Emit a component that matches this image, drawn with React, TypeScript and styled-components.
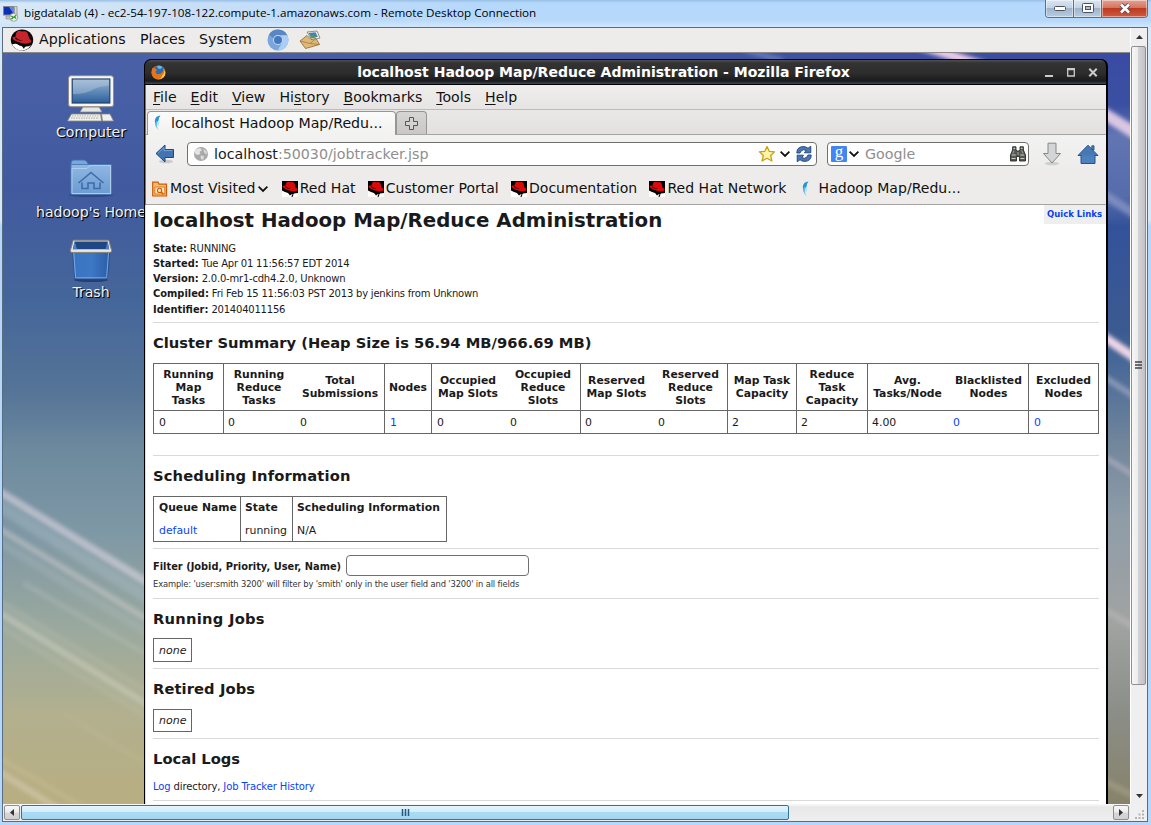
import React from 'react';
import styled, { createGlobalStyle } from 'styled-components';

const GlobalStyle = createGlobalStyle`
    body {
        margin: 0;
        overflow: hidden;
        font-family: 'DejaVu Sans', sans-serif;
        color: #1a1a1a;
    }
    * {
        box-sizing: border-box;
    }
    svg {
        display: block;
        flex: none;
    }
`;

const Screen = styled.div`
    display: flex;
    flex-direction: column;
    width: 1151px;
    height: 825px;
    background: linear-gradient(180deg, #d6e9fb 0, #d6e9fb 220px, #b4d8fb 226px, #b4d8fb 100%);
    overflow: hidden;
`;

const RdpTitle = styled.div`
    display: flex;
    align-items: flex-start;
    height: 27px;
    padding-left: 3px;
    background: linear-gradient(180deg, #98bfe6 0, rgba(255, 255, 255, 0) 3px, rgba(255, 255, 255, 0) 20px, #cfe5fb 26px),
        linear-gradient(90deg, #d9e8f6 0, #c9dff7 180px, #b5d8fb 480px, #b5d8fb 100%);
`;

const RdpCaption = styled.div`
    flex: 1;
    margin-left: 5px;
    font: 11.68px/26px 'Open Sans', 'Noto Sans', sans-serif;
    color: #000;
    white-space: nowrap;
`;

const RdpControls = styled.div`
    display: flex;
    width: 103px;
    height: 18px;
    margin-right: 3px;
    border: 1px solid #5d6f86;
    border-top: 0;
    border-radius: 0 0 4px 4px;
    overflow: hidden;
`;

const RdpButton = styled.div<{ $width: number; $close?: boolean }>`
    display: flex;
    align-items: center;
    justify-content: center;
    width: ${p => p.$width}px;
    border-left: ${p => (p.$width === 27 ? 0 : 1)}px solid #5d6f86;
    box-shadow: inset 0 0 0 1px rgba(255, 255, 255, 0.45);
    background: ${p =>
        p.$close
            ? 'linear-gradient(180deg, #e3a294 0, #d4745f 45%, #bd3a20 50%, #cf5c40 100%)'
            : 'linear-gradient(180deg, #dbe6f3 0, #c4d2e4 45%, #9fb3cb 50%, #b8cce2 100%)'};
`;

const Client = styled.div`
    display: grid;
    grid-template-columns: 1127px 17px;
    grid-template-rows: 776px 17px;
    width: 1146px;
    margin-left: 2px;
    border: 1px solid #5c6c80;
`;

const Remote = styled.div`
    display: flex;
    flex-direction: column;
    overflow: hidden;
`;

const GnomePanel = styled.div`
    display: flex;
    align-items: center;
    height: 25px;
    padding-left: 7px;
    background: #edeceb;
    border-bottom: 1px solid #8b8a86;
    font-size: 14.2px;
    color: #111;
`;

const PanelItem = styled.span<{ $width: number }>`
    width: ${p => p.$width}px;
    padding-bottom: 2px;
    line-height: 20px;
    white-space: nowrap;
`;

const Desktop = styled.div`
    position: relative;
    flex: 1;
    overflow: hidden;
    background: #4a66a4;
`;

const Wallpaper = styled.svg`
    position: absolute;
    top: 0;
    left: 0;
`;

const Launcher = styled.div<{ $top: number }>`
    position: absolute;
    left: 18px;
    top: ${p => p.$top}px;
    width: 140px;
    display: flex;
    flex-direction: column;
    align-items: center;
    font-size: 14.1px;
    line-height: 18px;
    color: #f2f2f2;
    white-space: nowrap;
    text-shadow: 1px 1px 1px #000, 1px 1px 0 rgba(0, 0, 0, 0.6);
`;

const Firefox = styled.div`
    position: absolute;
    left: 141px;
    top: 6px;
    width: 964px;
    height: 760px;
    display: flex;
    flex-direction: column;
    border: 1px solid #000;
    border-right-width: 2px;
    border-radius: 7px 7px 0 0;
    background: #000;
    overflow: hidden;
`;

const FirefoxTitle = styled.div`
    display: flex;
    align-items: center;
    height: 25px;
    padding: 0 8px 0 6px;
    border-bottom: 1px solid #000;
    background: linear-gradient(180deg, #505050 0, #333 3px, #2d2d2d 55%, #1a1a1a 21px, #3b4c66 24px);
`;

const FirefoxCaption = styled.div`
    flex: 1;
    padding-right: 3px;
    font-size: 14.03px;
    font-weight: bold;
    line-height: 22px;
    text-align: center;
    color: #fff;
`;

const Chrome = styled.div`
    border-left: 1px solid #777;
    background: #edeceb;
    color: #111;
    font-size: 14.1px;
`;

const MenuBar = styled.div`
    display: flex;
    gap: 14px;
    height: 25px;
    padding-left: 7px;
    line-height: 24px;
    border-bottom: 1px solid #bdbcba;
    background: linear-gradient(180deg, #efeeed, #e6e5e3);

    u {
        text-underline-offset: 2px;
        text-decoration-thickness: 1px;
    }
`;

const TabBar = styled.div`
    display: flex;
    align-items: flex-end;
    height: 25px;
    padding-left: 1px;
    border-bottom: 1px solid #a5a4a2;
    background: linear-gradient(180deg, #e9e8e6, #e2e1df);
`;

const Tab = styled.div`
    display: flex;
    align-items: center;
    width: 249px;
    height: 24px;
    margin-bottom: -1px;
    padding: 0 0 2px 3px;
    gap: 4px;
    border: 1px solid #979694;
    border-bottom: 0;
    border-radius: 4px 4px 0 0;
    background: linear-gradient(180deg, #fbfbfb, #f2f1f0);
    font-size: 14.2px;
`;

const NewTab = styled.div`
    display: flex;
    align-items: center;
    justify-content: center;
    width: 31px;
    height: 23px;
    border: 1px solid #979694;
    border-bottom: 0;
    border-radius: 4px 4px 0 0;
    background: linear-gradient(180deg, #d6d5d3, #c8c7c5);
`;

const NavBar = styled.div`
    display: flex;
    align-items: center;
    height: 38px;
    padding-left: 9px;
    background: linear-gradient(180deg, #f3f2f2, #edeceb);
`;

const Field = styled.div<{ $width: number; $left: number }>`
    display: flex;
    align-items: center;
    width: ${p => p.$width}px;
    height: 24px;
    margin-left: ${p => p.$left}px;
    padding: 0 4px 0 5px;
    border: 1px solid #70706e;
    border-radius: 4px;
    background: #fff;
    color: #8e8e8e;
    font-size: 14.24px;

    b {
        font-weight: normal;
        color: #1a1a1a;
    }
`;

const FieldText = styled.span<{ $left: number }>`
    flex: 1;
    margin-left: ${p => p.$left}px;
    white-space: nowrap;
`;

const ToolButton = styled.div<{ $left: number }>`
    margin-left: ${p => p.$left}px;
`;

const Bookmarks = styled.div`
    display: flex;
    align-items: center;
    height: 32px;
    padding-left: 6px;
    gap: 12.2px;
    border-bottom: 1px solid #a5a4a2;
    font-size: 14.05px;
`;

const Bookmark = styled.div<{ $gap?: number; $right?: number }>`
    display: flex;
    align-items: center;
    gap: ${p => p.$gap || 2}px;
    margin-right: ${p => p.$right || 0}px;
    white-space: nowrap;
`;

const BookmarkLabel = styled.span`
    padding-bottom: 2px;
`;

const Page = styled.div`
    position: relative;
    flex: 1;
    padding: 0 7px;
    border-left: 1px solid #ddd;
    background: #fff;
    overflow: hidden;
`;

const QuickLinks = styled.div`
    position: absolute;
    top: 0;
    right: 0;
    width: 62px;
    height: 19px;
    padding-left: 3px;
    background: #eee;
    font-size: 8.5px;
    font-weight: bold;
    line-height: 18px;
    white-space: nowrap;
    color: #0a40f5;
`;

const Section = styled.section<{ $height: number }>`
    height: ${p => p.$height}px;
    border-bottom: 1px solid #d9d9d9;
    overflow: hidden;
`;

const PageTitle = styled.h1`
    margin: 4px 0 8px;
    font-size: 19.77px;
    line-height: 24px;
`;

const Heading = styled.h2<{ $spacing?: number }>`
    margin: 10px 0 10px;
    font-size: 14.73px;
    line-height: 20px;
    letter-spacing: ${p => p.$spacing || 0}px;
`;

const MetaRow = styled.div<{ $top?: number; $spacing?: number }>`
    margin-top: ${p => p.$top || 0}px;
    font-size: 10px;
    line-height: 15px;
    letter-spacing: ${p => p.$spacing || -0.21}px;
    white-space: nowrap;

    b {
        font-size: 9.9px;
        letter-spacing: 0;
    }
`;

const Link = styled.span`
    color: #0a44f5;
`;

const Table = styled.div<{ $columns: string; $width: number }>`
    display: grid;
    grid-template-columns: ${p => p.$columns};
    width: ${p => p.$width}px;
    border: 1px solid #666;
    font-size: 10.8px;
`;

const HeadCell = styled.div<{ $line?: boolean; $height?: number; $pad?: number }>`
    display: flex;
    align-items: center;
    justify-content: ${p => (p.$pad ? 'flex-start' : 'center')};
    height: ${p => p.$height || 46}px;
    padding-left: ${p => p.$pad || 0}px;
    border-left: ${p => (p.$line ? 1 : 0)}px solid #666;
    line-height: 13px;
    font-weight: bold;
    text-align: center;
    white-space: pre;
`;

const Cell = styled.div<{ $line?: boolean; $pad?: number; $height?: number }>`
    height: ${p => p.$height || 22}px;
    padding-left: ${p => p.$pad || 4}px;
    border-left: ${p => (p.$line ? 1 : 0)}px solid #666;
    font-size: 10.9px;
    line-height: ${p => (p.$height || 22) + 2}px;
`;

const HeadLine = styled.div`
    grid-column: 1 / -1;
    height: 1px;
    background: #666;
`;

const FilterRow = styled.div`
    display: flex;
    align-items: center;
    height: 22px;
    margin-top: 5px;
    font-size: 9.85px;
    font-weight: bold;
`;

const FilterLabel = styled.label`
    width: 188px;
    padding-top: 2px;
    white-space: nowrap;
`;

const FilterInput = styled.input`
    width: 183px;
    height: 21px;
    margin-left: 5px;
    border: 1px solid #70706e;
    border-radius: 4px;
    background: #fff;
`;

const Example = styled.div`
    margin-top: 2px;
    font-size: 8.4px;
    line-height: 12px;
    letter-spacing: -0.15px;
    color: #333;
`;

const NoneBox = styled.div<{ $height: number }>`
    width: 39px;
    height: ${p => p.$height}px;
    margin-top: ${p => 23 - p.$height}px;
    padding-left: 5px;
    border: 1px solid #666;
    font-size: 11px;
    font-style: italic;
    line-height: ${p => p.$height - 1}px;
`;

const VScroll = styled.div`
    display: flex;
    flex-direction: column;
    align-items: center;
    background: #efefef;
    border-left: 1px solid #fff;
`;

const VThumb = styled.div`
    display: flex;
    flex: none;
    align-items: center;
    justify-content: center;
    width: 15px;
    height: 639px;
    margin-right: 1px;
    border: 1px solid #8f8f8f;
    border-radius: 2px;
    background: linear-gradient(90deg, #f7f7f7 0, #ececec 45%, #d3d3d6 50%, #c2c2c6 100%);
`;

const ArrowBox = styled.div<{ $bottom?: boolean }>`
    display: flex;
    flex: ${p => (p.$bottom ? '1' : 'none')};
    align-items: ${p => (p.$bottom ? 'flex-end' : 'center')};
    justify-content: center;
    height: 18px;
    padding-bottom: ${p => (p.$bottom ? 6 : 0)}px;
`;

const HScroll = styled.div`
    display: flex;
    align-items: center;
    padding: 0 1px;
    background: linear-gradient(180deg, #fafafa 0, #e8e8e8 3px, #efefef 100%);
`;

const HButton = styled.div`
    display: flex;
    align-items: center;
    justify-content: center;
    width: 16px;
    height: 15px;
    border: 1px solid #8f8f8f;
    border-radius: 2px;
    background: linear-gradient(180deg, #f6f6f6 0, #ececec 48%, #d6d6d8 52%, #d0d0d2 100%);
`;

const HThumb = styled.div`
    display: flex;
    align-items: center;
    justify-content: center;
    width: 768px;
    height: 15px;
    margin: 0 auto 0 1px;
    border: 1px solid #34729f;
    border-radius: 2px;
    background: linear-gradient(180deg, #e3f4fc 0, #d2edfa 46%, #a9dbf5 50%, #a4d6f0 100%);
`;

const Corner = styled.div`
    display: flex;
    align-items: flex-end;
    justify-content: flex-end;
    padding: 0 3px 2px 0;
    background: #f0f0f0;
`;

const STREAKS = [
    // left side
    { d: 'M-5 438 L150 533', w: 8, c: '#d6d2de', o: 0.65 },
    { d: 'M-5 452 L150 548', w: 12, c: '#a9bcc6', o: 0.4 },
    { d: 'M-5 475 L150 570', w: 6, c: '#cfcdcf', o: 0.5 },
    { d: 'M-5 488 L150 583', w: 9, c: '#b4c0c4', o: 0.25 },
    { d: 'M20 530 L150 605', w: 4, c: '#c3cbc8', o: 0.3 },
    { d: 'M-5 559 L150 655', w: 7, c: '#cdcfbe', o: 0.55 },
    { d: 'M-5 548 L150 642', w: 7, c: '#c0c2b0', o: 0.25 },
    { d: 'M-5 572 L150 667', w: 7, c: '#c0c2b0', o: 0.25 },
    { d: 'M60 660 L150 715', w: 4, c: '#c5bda4', o: 0.25 },
    { d: 'M-5 718 L70 765', w: 6, c: '#d8cbb0', o: 0.6 },
    { d: 'M-5 704 L90 760', w: 4, c: '#cdc195', o: 0.45 },
    // above the window
    { d: 'M915 -8 L985 14', w: 9, c: '#f6d2ee', o: 0.95 },
    { d: 'M740 -4 L780 8', w: 5, c: '#8aa0d4', o: 0.5 },
    // right side
    { d: 'M1095 57 L1135 82', w: 12, c: '#e2cce6', o: 0.95 },
    { d: 'M1095 138 L1135 163', w: 9, c: '#94a0ca', o: 0.65 },
    { d: 'M1095 280 L1135 307', w: 9, c: '#f8dcec', o: 0.95 },
    { d: 'M1095 320 L1135 346', w: 6, c: '#9aa5c2', o: 0.75 },
    { d: 'M1095 400 L1135 425', w: 5, c: '#b4b2c0', o: 0.7 },
    { d: 'M1095 553 L1135 576', w: 6, c: '#bdb7b8', o: 0.6 },
    { d: 'M1095 725 L1135 745', w: 6, c: '#b0aa90', o: 0.5 },
];

const DesktopWallpaper = () => (
    <Wallpaper width="1127" height="751">
        <defs>
            <linearGradient id="skyLeft" x1="0" y1="0" x2="0" y2="1">
                <stop offset="0" stopColor="#4a61a8" />
                <stop offset="0.18" stopColor="#415a9f" />
                <stop offset="0.33" stopColor="#45669a" />
                <stop offset="0.45" stopColor="#557497" />
                <stop offset="0.53" stopColor="#6d8a9e" />
                <stop offset="0.64" stopColor="#7f98a5" />
                <stop offset="0.77" stopColor="#9ba99e" />
                <stop offset="0.88" stopColor="#b2b08e" />
                <stop offset="1" stopColor="#b9ae82" />
            </linearGradient>
            <linearGradient id="skyRight" x1="0" y1="0" x2="0" y2="1">
                <stop offset="0" stopColor="#394ba2" />
                <stop offset="0.07" stopColor="#3b50a2" />
                <stop offset="0.11" stopColor="#6175b2" />
                <stop offset="0.19" stopColor="#566cab" />
                <stop offset="0.23" stopColor="#34529b" />
                <stop offset="0.37" stopColor="#3b5a90" />
                <stop offset="0.42" stopColor="#4a6a98" />
                <stop offset="0.52" stopColor="#72869c" />
                <stop offset="0.62" stopColor="#8f9da8" />
                <stop offset="0.76" stopColor="#a1a3a2" />
                <stop offset="0.88" stopColor="#8b8d87" />
                <stop offset="1" stopColor="#87836a" />
            </linearGradient>
            <linearGradient id="skyBlend" x1="0" y1="0" x2="1" y2="0">
                <stop offset="0" stopColor="#4a61a8" />
                <stop offset="1" stopColor="#394ba2" />
            </linearGradient>
            <filter id="soft" x="-20%" y="-20%" width="140%" height="140%">
                <feGaussianBlur stdDeviation="2" />
            </filter>
        </defs>
        <rect width="900" height="751" fill="url(#skyLeft)" />
        <rect x="900" width="227" height="751" fill="url(#skyRight)" />
        <rect x="150" width="950" height="10" fill="url(#skyBlend)" />
        {STREAKS.map(s => (
            <path key={s.d} d={s.d} stroke={s.c} strokeWidth={s.w} opacity={s.o} filter="url(#soft)" />
        ))}
    </Wallpaper>
);

const RdpIcon = () => (
    <svg width="16" height="17" viewBox="0 0 16 17">
        <rect x="0.5" y="1.5" width="10" height="8.5" fill="#0d2fb5" stroke="#7f8790" />
        <path d="M6 2 L10 2 L10 8 Z" fill="#5b86ee" />
        <path d="M11.5 1.5 h2.5 v9 h-2.5 z" fill="#d9d9d3" stroke="#8d8d85" strokeWidth="0.8" />
        <path d="M3 11 h6 v3 h-6 z" fill="#c9c9c2" stroke="#85857d" strokeWidth="0.6" />
        <circle cx="10.8" cy="12.3" r="4" fill="#eef2ea" stroke="#8b9286" strokeWidth="0.8" />
        <path d="M8.3 11 l2 1.6 l-2 1.6 M13.2 10.3 l-2 1.6 l2 1.6" fill="none" stroke="#2c9a2c" strokeWidth="1.3" />
    </svg>
);

const HatLogo = () => (
    <svg width="24" height="22" viewBox="0 0 24 22">
        <ellipse cx="12" cy="11" rx="11.2" ry="10.6" fill="#080808" />
        <path d="M2 15.5 Q4.5 14.2 7 15 Q9 17 12 17.2 L14 20 Q14 18 16 17.5 Q19 17.5 21 16 L18.5 19.2 Q14 22.3 9 21.3 Q4.5 19.8 2 15.5 Z" fill="#fff" />
        <path
            d="M2.5 9.5 Q2 7.5 5.5 7.7 Q6 2.5 8.5 1.8 Q10 1.6 12 2.6 Q16.5 1.6 17.6 4 L19.3 9.6 Q22.5 12 20.5 13.6 Q17 15.7 10.5 13.8 Q4 12 2.5 9.5 Z"
            fill="#c8242c"
        />
        <path d="M5.8 8 Q8.5 11.5 13 11.2 Q9.5 12.6 5 9.8 Z" fill="#3c0709" />
    </svg>
);

const HatFavicon = () => (
    <svg width="16" height="16" viewBox="0 0 16 16">
        <rect width="16" height="16" fill="#000" />
        <path d="M0 9.5 L3 11 L6 12 L8 14.5 L9.5 13.2 L11 13.8 L12 12.5 L16 12 V16 H0 Z" fill="#fff" />
        <path d="M3.5 10 L9 11 L8.5 13.2 L6.5 11.8 Z M10 14 L11.5 13.5 L10.5 16 H9.5 Z" fill="#000" />
        <path
            d="M0.5 5.5 Q1 4.2 3.3 4.8 L4.6 1.2 Q6.5 0.2 8.5 1.2 Q11.8 0.6 12.6 2.4 L13.4 6.2 Q16 7.6 15.5 9.2 Q13 11.4 8 9.8 Q2.5 8.5 0.5 5.5 Z"
            fill="#d80a0a"
        />
        <path d="M3.3 5 Q5.5 7.6 9 7.4 Q6 8.6 3 6.3 Z" fill="#400" />
    </svg>
);

const ChromiumIcon = () => (
    <svg width="22" height="22" viewBox="0 0 22 22">
        <circle cx="11" cy="11" r="10.5" fill="#7ba6dc" />
        <path d="M1.9 5.8 A10.5 10.5 0 0 1 20.3 6.2 L11 6.2 Q7.5 6.4 6.5 9.5 Z" fill="#5a86c3" />
        <path d="M20.3 6.2 A10.5 10.5 0 0 1 10.5 21.5 L15.3 13.5 Q16.5 9.5 13.8 6.2 Z" fill="#a9cdf3" />
        <circle cx="11" cy="11" r="5" fill="#c4daf4" />
        <circle cx="11" cy="11" r="4" fill="#4478c2" />
    </svg>
);

const MailIcon = () => (
    <svg width="22" height="20" viewBox="0 0 22 20">
        <path d="M8 2 L18 1 L21 8 L13 10 Z" fill="#f4f4ee" stroke="#777" strokeWidth="0.8" />
        <path d="M9.5 3 L16.5 2.3 L18.8 6.7 L12.8 8.3 Z" fill="#4a7fb5" />
        <path d="M11 6.5 l3 -2 l3.5 2.5 l-4.5 1.2 z" fill="#4f9a5a" />
        <path d="M1 11 L8 5.5 L12 9.5 L17 8.5 L20.5 14.5 L6.5 18.5 Z" fill="#dfb878" stroke="#8a6530" strokeWidth="0.8" />
        <path d="M1 11 L11 13.5 L17 8.5 M11 13.5 L20.5 14.5" fill="none" stroke="#a47a3e" strokeWidth="0.8" />
    </svg>
);

const ComputerIcon = () => (
    <svg width="48" height="48" viewBox="0 0 48 48">
        <defs>
            <linearGradient id="screen" x1="0" y1="0" x2="0" y2="1">
                <stop offset="0" stopColor="#9cb7d2" />
                <stop offset="1" stopColor="#2a5f9e" />
            </linearGradient>
        </defs>
        <path d="M16 32 h16 l3 5 h-22 z" fill="#e6e6e2" stroke="#8c8c86" strokeWidth="0.8" />
        <rect x="1.5" y="0.7" width="45" height="31" rx="2.5" fill="#f6f6f4" stroke="#908e86" />
        <rect x="5.2" y="4" width="37.6" height="24" fill="url(#screen)" stroke="#24406c" strokeWidth="1.2" />
        <path d="M6 19 Q20 19 27 14 Q33 11 42 10.5 V4.8 H6 Z" fill="#bcd0e2" opacity="0.4" />
        <path d="M36 34 q6 -2 9 0 q2 3 -4 3" fill="none" stroke="#3a68b0" strokeWidth="1.2" />
        <path d="M4.5 39 h29 l1 7 h-34 z" fill="#f0f0ec" stroke="#8c8c86" strokeWidth="0.8" />
        <path d="M5 41 h27 M4 43.2 h28" stroke="#b5b5ae" strokeWidth="1.2" strokeDasharray="1.5 1" />
        <path d="M34.5 39 h8.5 l3.5 7 h-11 z" fill="#f0f0ec" stroke="#8c8c86" strokeWidth="0.8" />
    </svg>
);

const HomeFolderIcon = () => (
    <svg width="46" height="40" viewBox="0 0 46 40">
        <defs>
            <linearGradient id="folder" x1="0" y1="0" x2="0" y2="1">
                <stop offset="0" stopColor="#8fb7e2" />
                <stop offset="1" stopColor="#6c9bd0" />
            </linearGradient>
        </defs>
        <ellipse cx="23" cy="36" rx="22" ry="2" fill="#1f3464" opacity="0.5" />
        <path d="M3 11 V4 Q3 1 6 1 h10 q2 0 3 2 l2 3 h3 v5 z" fill="#79a7db" stroke="#3f6fae" strokeWidth="0.9" />
        <rect x="3" y="5.5" width="40.5" height="30" rx="1" fill="url(#folder)" stroke="#4a78b6" strokeWidth="0.9" />
        <path d="M4 34.5 V9.5 H19 L22 6.5 H42.5 V34.5 Z" fill="none" stroke="#b3d0f0" strokeWidth="0.9" />
        <path
            d="M10.5 24 L23 13.5 L35.5 24 M14 23.5 V29.5 H20 V24 H26 V29.5 H32 V23.5"
            fill="none"
            stroke="#3c6cac"
            strokeWidth="1.6"
        />
    </svg>
);

const TrashIcon = () => (
    <svg width="44" height="44" viewBox="0 0 44 44">
        <defs>
            <linearGradient id="bin" x1="0" y1="0" x2="1" y2="0">
                <stop offset="0" stopColor="#3a74c0" />
                <stop offset="0.5" stopColor="#3d78c6" />
                <stop offset="1" stopColor="#2b5ca4" />
            </linearGradient>
        </defs>
        <ellipse cx="22" cy="41" rx="17" ry="2" fill="#15264e" opacity="0.6" />
        <path d="M3.5 12 L5.5 37 Q5.7 40 8 40 H36 Q38.5 40 38.7 37 L41 12 Z" fill="url(#bin)" stroke="#2a4f8c" strokeWidth="0.9" />
        <path d="M4.7 13 L6.6 38.8 H37.6 L39.6 13" fill="none" stroke="#7fb0ea" strokeWidth="0.9" />
        <path d="M4.2 1.2 H39.8 L42.6 11.5 Q42.8 13.4 41 13.4 H3 Q1.2 13.4 1.4 11.5 Z" fill="#e9e8e2" stroke="#84837a" strokeWidth="1" />
        <path d="M5.7 2.4 H38.6 L40.2 10.2 H3.8 Z" fill="#1f4685" />
        <path d="M5.7 2.4 L8 10.2 H3.8 Z M38.6 2.4 L36.5 10.2 H40.2 Z" fill="#4e82c4" />
    </svg>
);

const FirefoxIcon = () => (
    <svg width="15" height="15" viewBox="0 0 15 15">
        <circle cx="7.5" cy="7.5" r="7" fill="#e36a13" />
        <circle cx="8.3" cy="5.8" r="5.3" fill="#2c6bb4" />
        <path d="M6 1.2 Q9 0 11.5 2 L9.5 4 L7 3.5 Z" fill="#67b7e6" />
        <path d="M1 4 Q2 2 2.8 3.5 Q5 3.2 6 5 L4.5 6.5 Q4.5 9 7 9.3 Q10 9.3 11.5 7 Q12.8 5 12 2.6 Q15 5.5 14.4 8.7 Q13 14 7.5 14.5 Q1.5 14 0.6 8.5 Z" fill="#e8741a" />
        <path d="M11.5 10 Q14 7.5 13 4.5 Q15 7 14 10 Q12 14 8 14 Q11 13 11.5 10 Z" fill="#fbd13a" />
    </svg>
);

const FeatherIcon = () => (
    <svg width="16" height="16" viewBox="0 0 16 16">
        <path d="M9.5 0.5 Q4.2 0.8 3.8 6 Q3.8 9.5 5.4 12 Q5 8 7.6 5.5 Q7.6 2.6 9.5 0.5 Z" fill="#1f95dc" />
        <path d="M6.2 5 Q4.8 10 7.5 15 Q4.3 12.4 4.2 8 Z" fill="#63c2f0" />
        <path d="M6 8 l2 -0.8 l-1.6 2.2 l1.5 -0.3 l-1.2 1.8" fill="none" stroke="#9fdcf8" strokeWidth="0.8" />
    </svg>
);

const BackIcon = () => (
    <svg width="20" height="20" viewBox="0 0 20 20">
        <ellipse cx="11" cy="17.5" rx="7" ry="1.8" fill="#bbb" opacity="0.7" />
        <path d="M1 9.5 L10 1 V5.5 H18.5 V13.5 H10 V18 Z" fill="#4273b3" stroke="#1f4880" strokeWidth="1" />
        <path d="M2.8 9.5 L9 3.5 V6.6 H17.4" fill="none" stroke="#7fa6d6" strokeWidth="0.9" />
    </svg>
);

const GlobeIcon = () => (
    <svg width="16" height="16" viewBox="0 0 16 16">
        <circle cx="8" cy="8" r="7" fill="#a9a9a9" />
        <path d="M2 4.5 Q4.5 1.5 7.5 2.3 L9 4 L6.5 6 L7.5 8 L4.5 9 L2 7.5 Z" fill="#e4e4e4" />
        <path d="M10 3 L13.5 5 L14 8.5 L11.5 7 Z M7.5 9.5 L11 10 L10.5 13.2 L8 13.5 Z" fill="#dcdcdc" />
    </svg>
);

const StarIcon = () => (
    <svg width="18" height="18" viewBox="0 0 18 18">
        <path
            d="M9 1.5 L11.2 6.3 L16.6 6.8 L12.7 10.5 L13.9 16 L9 13.3 L4.1 16 L5.3 10.5 L1.4 6.8 L6.8 6.3 Z"
            fill="#fdf6a8"
            stroke="#caa016"
            strokeWidth="1.3"
            strokeLinejoin="round"
        />
    </svg>
);

const Chevron = () => (
    <svg width="10" height="8" viewBox="0 0 10 8">
        <path d="M0.6 1.6 L5 5.9 L9.4 1.6" fill="none" stroke="#111" strokeWidth="1.8" />
    </svg>
);

const ReloadIcon = () => (
    <svg width="16" height="18" viewBox="0 0 16 18">
        <path d="M0.8 8 Q0.8 2 7 1.6 Q10 1.4 12 3.3 L14.8 1.2 V7.8 H8.4 L10.2 5.4 Q7.4 3.8 5 6 L4 8 Z" fill="#4a78b6" stroke="#1e4376" strokeWidth="0.9" />
        <path d="M15.2 10 Q15.2 16 9 16.4 Q6 16.6 4 14.7 L1.2 16.8 V10.2 H7.6 L5.8 12.6 Q8.6 14.2 11 12 L12 10 Z" fill="#4a78b6" stroke="#1e4376" strokeWidth="0.9" />
    </svg>
);

const GoogleBadge = styled.span`
    width: 16px;
    height: 16px;
    margin-left: -2px;
    margin-right: 2px;
    border-radius: 1px;
    background: #4285f4;
    color: #fff;
    font: 17px/11px 'Liberation Serif', serif;
    text-align: center;
`;

const BinocularsIcon = () => (
    <svg width="16" height="16" viewBox="0 0 16 16">
        <path d="M2.6 0.8 H6 V4 L7 5 H9 L10 4 V0.8 H13.4 V4 L15.5 9 V15 H9.5 V10.5 H6.5 V15 H0.5 V9 L2.6 4 Z" fill="#555753" stroke="#2a2b29" strokeWidth="0.9" />
        <path d="M1.8 9 H5.7 M10.3 9 H14.2 M3.4 2.4 H5.2 M10.8 2.4 H12.6 M1.6 12.5 H5.6 M10.4 12.5 H14.4" stroke="#c8cac5" strokeWidth="1.1" />
        <path d="M4 4.5 L2.8 7.4 M11.8 4.5 L13 7.4 M8 6 V9" stroke="#a3a5a0" strokeWidth="1" />
    </svg>
);

const DownloadIcon = () => (
    <svg width="20" height="24" viewBox="0 0 20 24">
        <ellipse cx="10" cy="21.5" rx="7" ry="1.8" fill="#bbb" opacity="0.6" />
        <path d="M6 1.2 H14 V11.5 H18.5 L10 21 L1.5 11.5 H6 Z" fill="#d3d6d6" stroke="#858885" strokeWidth="1" />
    </svg>
);

const HomeIcon = () => (
    <svg width="22" height="21" viewBox="0 0 22 21">
        <path d="M4 10 V19.5 H18 V10 L11 3.5 Z" fill="#4d80bd" stroke="#28528c" strokeWidth="1" />
        <path d="M14.8 1.8 H17 V6 H14.8 Z" fill="#4d80bd" stroke="#28528c" strokeWidth="0.9" />
        <path d="M1 11.5 L11 1.2 L21 11.5 Z" fill="#4678b6" stroke="#28528c" strokeWidth="1" />
        <path d="M4.6 10.6 H17.4 V12.6 H4.6 Z" fill="#4a7cba" />
    </svg>
);

const MostVisitedIcon = () => (
    <svg width="16" height="16" viewBox="0 0 16 16">
        <path d="M0.7 15 V1.2 H6 L7 3.2 H14.5 V15 Z" fill="#f6b877" stroke="#ce5c00" strokeWidth="1.2" />
        <path d="M2.8 13 V6 H12.8 V13 Z" fill="#fce3c4" stroke="#e07b1c" strokeWidth="1" />
        <circle cx="7.6" cy="9.4" r="2.1" fill="none" stroke="#ce5c00" strokeWidth="1.1" />
        <path d="M9.2 11 L11.4 13.2" stroke="#ce5c00" strokeWidth="1.3" />
    </svg>
);

const PlusIcon = () => (
    <svg width="13" height="13" viewBox="0 0 13 13">
        <path d="M4.5 0.5 H8.5 V4.5 H12.5 V8.5 H8.5 V12.5 H4.5 V8.5 H0.5 V4.5 H4.5 Z" fill="#d4d3d1" stroke="#555" strokeWidth="1" />
    </svg>
);

const WindowButtons = () => (
    <svg width="54" height="14" viewBox="0 0 54 14">
        <path d="M1 11 H9" stroke="#ccc" strokeWidth="2" />
        <path d="M23.7 4.5 H30.3 V11 H23.7 Z" fill="none" stroke="#ccc" strokeWidth="1.3" />
        <path d="M23 4 H31" stroke="#ccc" strokeWidth="1.8" />
        <path d="M45.3 3.8 L52.7 11.2 M52.7 3.8 L45.3 11.2" stroke="#ccc" strokeWidth="2" />
    </svg>
);

const MENUS: [string, string, string][] = [
    ['', 'F', 'ile'],
    ['', 'E', 'dit'],
    ['', 'V', 'iew'],
    ['Hi', 's', 'tory'],
    ['', 'B', 'ookmarks'],
    ['', 'T', 'ools'],
    ['', 'H', 'elp'],
];

const BOOKMARKS = ['Red Hat', 'Customer Portal', 'Documentation', 'Red Hat Network'];

const META = [
    { label: 'State', value: 'RUNNING' },
    { label: 'Started', value: 'Tue Apr 01 11:56:57 EDT 2014' },
    { label: 'Version', value: '2.0.0-mr1-cdh4.2.0, Unknown' },
    { label: 'Compiled', value: 'Fri Feb 15 11:56:03 PST 2013 by jenkins from Unknown' },
    { label: 'Identifier', value: '201404011156' },
];

const SUMMARY = [
    { head: 'Running\nMap\nTasks', value: '0', width: 69, pad: 5 },
    { head: 'Running\nReduce\nTasks', value: '0', width: 71, line: true },
    { head: 'Total\nSubmissions', value: '0', width: 90, pad: 6, shift: 1 },
    { head: 'Nodes', value: '1', width: 47, line: true, link: true, pad: 5 },
    { head: 'Occupied\nMap Slots', value: '0', width: 73, line: true, pad: 5 },
    { head: 'Occupied\nReduce\nSlots', value: '0', width: 76, pad: 6, shift: 1 },
    { head: 'Reserved\nMap Slots', value: '0', width: 72, line: true },
    { head: 'Reserved\nReduce\nSlots', value: '0', width: 75, pad: 6, shift: 1 },
    { head: 'Map Task\nCapacity', value: '2', width: 69, line: true },
    { head: 'Reduce\nTask\nCapacity', value: '2', width: 71, line: true },
    { head: 'Avg.\nTasks/Node', value: '4.00', width: 80, line: true },
    { head: 'Blacklisted\nNodes', value: '0', width: 81, link: true, pad: 6, shift: 1 },
    { head: 'Excluded\nNodes', value: '0', width: 70, line: true, link: true, pad: 5 },
];

const HeadLabel = styled.span<{ $shift: number }>`
    padding-left: ${p => p.$shift * 2}px;
`;

const ClusterSummary = () => (
    <Table $width={946} $columns={SUMMARY.map(c => `${c.width}px`).join(' ')}>
        {SUMMARY.map(c => (
            <HeadCell key={c.head} $line={c.line}>
                <HeadLabel $shift={c.shift || 0}>{c.head}</HeadLabel>
            </HeadCell>
        ))}
        <HeadLine />
        {SUMMARY.map(c => (
            <Cell key={c.head} $line={c.line} $pad={c.pad}>
                {c.link ? <Link>{c.value}</Link> : c.value}
            </Cell>
        ))}
    </Table>
);

const SchedulingTable = () => (
    <Table $width={294} $columns="86px 52px 154px">
        <HeadCell $height={21} $pad={5}>Queue Name</HeadCell>
        <HeadCell $line $height={21} $pad={4}>State</HeadCell>
        <HeadCell $line $height={21} $pad={4}>Scheduling Information</HeadCell>
        <Cell $height={23} $pad={5}><Link>default</Link></Cell>
        <Cell $height={23} $line>running</Cell>
        <Cell $height={23} $line>N/A</Cell>
    </Table>
);

const JobTracker = () => (
    <Page>
        <QuickLinks>Quick Links</QuickLinks>
        <Section $height={118}>
            <PageTitle>localhost Hadoop Map/Reduce Administration</PageTitle>
            {META.map((m, index) => (
                <MetaRow key={m.label} $top={index === 4 ? 1 : 0}>
                    <b>{m.label}:</b> {m.value}
                </MetaRow>
            ))}
        </Section>
        <Section $height={133}>
            <Heading>Cluster Summary (Heap Size is 56.94 MB/966.69 MB)</Heading>
            <ClusterSummary />
        </Section>
        <Section $height={93}>
            <Heading $spacing={0.13}>Scheduling Information</Heading>
            <SchedulingTable />
        </Section>
        <Section $height={50}>
            <FilterRow>
                <FilterLabel>Filter (Jobid, Priority, User, Name)</FilterLabel>
                <FilterInput />
            </FilterRow>
            <Example>Example: 'user:smith 3200' will filter by 'smith' only in the user field and '3200' in all fields</Example>
        </Section>
        <Section $height={70}>
            <Heading $spacing={0.25}>Running Jobs</Heading>
            <NoneBox $height={24}>none</NoneBox>
        </Section>
        <Section $height={70}>
            <Heading $spacing={0.08}>Retired Jobs</Heading>
            <NoneBox $height={23}>none</NoneBox>
        </Section>
        <Section $height={62}>
            <Heading>Local Logs</Heading>
            <MetaRow $spacing={-0.12}>
                <Link>Log</Link> directory, <Link>Job Tracker History</Link>
            </MetaRow>
        </Section>
    </Page>
);

const FirefoxWindow = () => (
    <Firefox>
        <FirefoxTitle>
            <FirefoxIcon />
            <FirefoxCaption>localhost Hadoop Map/Reduce Administration - Mozilla Firefox</FirefoxCaption>
            <WindowButtons />
        </FirefoxTitle>
        <Chrome>
            <MenuBar>
                {MENUS.map(([before, key, after]) => (
                    <span key={after}>{before}<u>{key}</u>{after}</span>
                ))}
            </MenuBar>
            <TabBar>
                <Tab>
                    <FeatherIcon />
                    localhost Hadoop Map/Redu...
                </Tab>
                <NewTab><PlusIcon /></NewTab>
            </TabBar>
            <NavBar>
                <BackIcon />
                <Field $width={630} $left={12}>
                    <GlobeIcon />
                    <FieldText $left={5}><b>localhost</b>:50030/jobtracker.jsp</FieldText>
                    <StarIcon />
                    <ToolButton $left={4}><Chevron /></ToolButton>
                    <ToolButton $left={6}><ReloadIcon /></ToolButton>
                </Field>
                <Field $width={202} $left={10}>
                    <GoogleBadge>g</GoogleBadge>
                    <Chevron />
                    <FieldText $left={6}>Google</FieldText>
                    <ToolButton $left={0} style={{ marginRight: -2 }}><BinocularsIcon /></ToolButton>
                </Field>
                <ToolButton $left={13}><DownloadIcon /></ToolButton>
                <ToolButton $left={15}><HomeIcon /></ToolButton>
            </NavBar>
            <Bookmarks>
                <Bookmark $right={2}>
                    <MostVisitedIcon />
                    <BookmarkLabel>Most Visited</BookmarkLabel>
                    <Chevron />
                </Bookmark>
                {BOOKMARKS.map(name => (
                    <Bookmark key={name}>
                        <HatFavicon />
                        <BookmarkLabel>{name}</BookmarkLabel>
                    </Bookmark>
                ))}
                <Bookmark $gap={4}>
                    <FeatherIcon />
                    <BookmarkLabel>Hadoop Map/Redu...</BookmarkLabel>
                </Bookmark>
            </Bookmarks>
        </Chrome>
        <JobTracker />
    </Firefox>
);

const App = () => (
    <>
        <GlobalStyle />
        <Screen>
            <RdpTitle>
                <svg width="16" height="24" viewBox="0 -5 16 24"><RdpIcon /></svg>
                <RdpCaption>
                    bigdatalab (4) - ec2-54-197-108-122.compute-1.amazonaws.com - Remote Desktop Connection
                </RdpCaption>
                <RdpControls>
                    <RdpButton $width={27}>
                        <svg width="12" height="5"><rect x="0.5" y="0.5" width="11" height="4" rx="1" fill="#fff" stroke="#4b5360" /></svg>
                    </RdpButton>
                    <RdpButton $width={28}>
                        <svg width="12" height="11">
                            <rect x="0.5" y="0.5" width="11" height="9" rx="1" fill="#fff" stroke="#4b5360" />
                            <rect x="3.5" y="3.5" width="5" height="3" fill="#b0c0d4" stroke="#4b5360" />
                        </svg>
                    </RdpButton>
                    <RdpButton $width={46} $close>
                        <svg width="12" height="11" viewBox="0 0 12 11">
                            <path d="M2 1.5 L10 9.5 M10 1.5 L2 9.5" stroke="#4b4f5a" strokeWidth="4.4" />
                            <path d="M2 1.5 L10 9.5 M10 1.5 L2 9.5" stroke="#fff" strokeWidth="2.6" />
                        </svg>
                    </RdpButton>
                </RdpControls>
            </RdpTitle>
            <Client>
                <Remote>
                    <GnomePanel>
                        <HatLogo />
                        <PanelItem $width={101} style={{ marginLeft: 5 }}>Applications</PanelItem>
                        <PanelItem $width={59}>Places</PanelItem>
                        <PanelItem $width={68}>System</PanelItem>
                        <ChromiumIcon />
                        <ToolButton $left={10}><MailIcon /></ToolButton>
                    </GnomePanel>
                    <Desktop>
                        <DesktopWallpaper />
                        <Launcher $top={22}>
                            <ComputerIcon />
                            Computer
                        </Launcher>
                        <Launcher $top={106}>
                            <HomeFolderIcon />
                            <span style={{ marginTop: 4 }}>hadoop's Home</span>
                        </Launcher>
                        <Launcher $top={186}>
                            <TrashIcon />
                            Trash
                        </Launcher>
                        <FirefoxWindow />
                    </Desktop>
                </Remote>
                <VScroll>
                    <ArrowBox>
                        <svg width="7" height="4"><path d="M3.5 0 L7 4 H0 Z" fill="#333" /></svg>
                    </ArrowBox>
                    <VThumb>
                        <svg width="7" height="9"><path d="M0 1 H7 M0 4 H7 M0 7 H7" stroke="#444" strokeWidth="1.4" /></svg>
                    </VThumb>
                    <ArrowBox $bottom>
                        <svg width="7" height="4"><path d="M0 0 H7 L3.5 4 Z" fill="#333" /></svg>
                    </ArrowBox>
                </VScroll>
                <HScroll>
                    <HButton>
                        <svg width="4" height="7"><path d="M4 0 V7 L0 3.5 Z" fill="#333" /></svg>
                    </HButton>
                    <HThumb>
                        <svg width="9" height="7"><path d="M1.5 0 V7 M4.5 0 V7 M7.5 0 V7" stroke="#27587c" strokeWidth="1.5" /></svg>
                    </HThumb>
                    <HButton>
                        <svg width="4" height="7"><path d="M0 0 V7 L4 3.5 Z" fill="#333" /></svg>
                    </HButton>
                </HScroll>
                <Corner>
                    <svg width="9" height="9">
                        <path d="M7 0 h2 v2 h-2 z M7 3.5 h2 v2 h-2 z M7 7 h2 v2 h-2 z M3.5 3.5 h2 v2 h-2 z M3.5 7 h2 v2 h-2 z M0 7 h2 v2 h-2 z" fill="#b4b4b4" />
                    </svg>
                </Corner>
            </Client>
        </Screen>
    </>
);

export default App;
